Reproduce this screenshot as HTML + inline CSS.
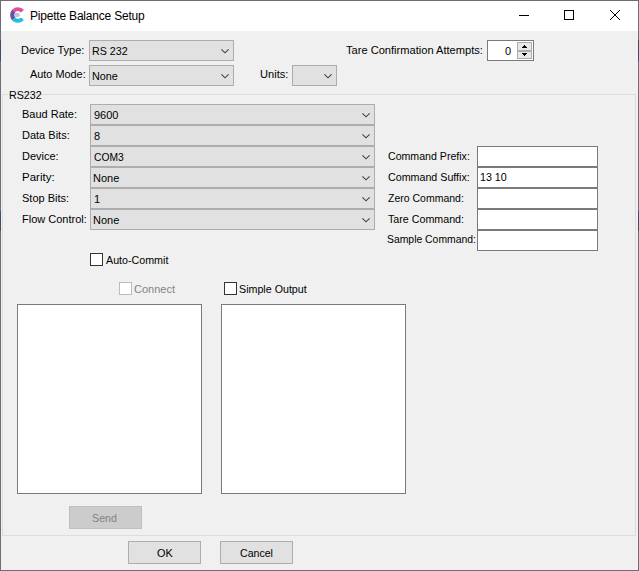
<!DOCTYPE html>
<html><head><meta charset="utf-8">
<style>
html,body{margin:0;padding:0;}
body{width:639px;height:571px;position:relative;overflow:hidden;background:#F0F0F0;font-family:"Liberation Sans",sans-serif;}
.a{position:absolute;box-sizing:border-box;}
.t{position:absolute;font-size:11px;line-height:13px;white-space:nowrap;color:#000;}
.cb{position:absolute;box-sizing:border-box;background:#E1E1E1;border:1px solid #ADADAD;height:21px;}
.tb{position:absolute;box-sizing:border-box;background:#FFFFFF;border:1px solid #7A7A7A;height:21px;}
.btn{position:absolute;box-sizing:border-box;background:#E1E1E1;border:1px solid #ADADAD;width:73px;height:23px;}
.chk{position:absolute;box-sizing:border-box;background:#FFFFFF;border:1px solid #333333;width:13px;height:13px;}
</style></head>
<body>
<div class="a" style="left:0;top:0;width:639px;height:31px;background:#FFFFFF;"></div>
<div class="a" style="left:0;top:0;width:639px;height:1px;background:#6E6E6E;"></div>
<div class="a" style="left:0;top:570px;width:639px;height:1px;background:#6E6E6E;"></div>
<div class="a" style="left:0;top:0;width:1px;height:571px;background:#6E6E6E;"></div>
<div class="a" style="left:638px;top:0;width:1px;height:571px;background:#6E6E6E;"></div>
<div class="a" style="left:0;top:40px;width:1px;height:21px;background:#3E4D6B;"></div>
<div class="a" style="left:638px;top:40px;width:1px;height:21px;background:#3E4D6B;"></div>
<div class="a" style="left:0;top:211px;width:1px;height:20px;background:#3E4D6B;"></div>
<div class="a" style="left:638px;top:211px;width:1px;height:20px;background:#3E4D6B;"></div>
<svg class="a" style="left:6px;top:4px" width="24" height="22" viewBox="6 4 24 22">
  <path d="M12.3 9.4 A8 8 0 0 1 23.9 9.9 L20.9 12.4 A3.6 3.6 0 0 0 15.2 12.3 Z" fill="#E44C9C"/>
  <path d="M12.3 9.4 L15.2 12.3 L14.2 14.9 L15.2 17.5 L12.3 20.4 A8 8 0 0 1 12.3 9.4 Z" fill="#6B50AA"/>
  <path d="M12.3 20.4 L15.2 17.5 A3.6 3.6 0 0 0 20.9 17.4 L23.9 19.9 A8 8 0 0 1 12.3 20.4 Z" fill="#1CC0E2"/>
  <ellipse cx="17.0" cy="14.9" rx="2.8" ry="2.1" fill="#C3C3C8"/>
</svg>
<div class="t" style="left:30px;top:10px;font-size:12px;letter-spacing:-0.2px;color:#000;">Pipette Balance Setup</div>
<div class="a" style="left:519px;top:15px;width:10px;height:1px;background:#000;"></div>
<div class="a" style="left:564px;top:10px;width:10px;height:10px;border:1px solid #000;"></div>
<svg class="a" style="left:610px;top:10px" width="10" height="10" viewBox="0 0 10 10" shape-rendering="crispEdges"><path d="M0 0h1v1h-1zM1 1h1v1h-1zM2 2h1v1h-1zM3 3h1v1h-1zM4 4h2v2h-2zM6 6h1v1h-1zM7 7h1v1h-1zM8 8h1v1h-1zM9 9h1v1h-1zM9 0h1v1h-1zM8 1h1v1h-1zM7 2h1v1h-1zM6 3h1v1h-1zM3 6h1v1h-1zM2 7h1v1h-1zM1 8h1v1h-1zM0 9h1v1h-1z" fill="#000"/></svg>
<div class="t" style="left:21px;top:44px;font-size:11.0px;color:#000;">Device Type:</div>
<div class="cb" style="left:89px;top:40px;width:145px;height:21px;"></div><svg class="a" style="left:220px;top:48px" width="10" height="6" viewBox="0 0 10 6"><polyline points="1.4,1.4 5,4.8 8.6,1.4" fill="none" stroke="#404040" stroke-width="1.1"/></svg>
<div class="t" style="left:92px;top:45px;font-size:10.7px;color:#000;">RS 232</div>
<div class="t" style="left:30px;top:68px;font-size:10.9px;color:#000;">Auto Mode:</div>
<div class="cb" style="left:89px;top:65px;width:145px;height:21px;"></div><svg class="a" style="left:220px;top:73px" width="10" height="6" viewBox="0 0 10 6"><polyline points="1.4,1.4 5,4.8 8.6,1.4" fill="none" stroke="#404040" stroke-width="1.1"/></svg>
<div class="t" style="left:92px;top:70px;font-size:10.8px;color:#000;">None</div>
<div class="t" style="left:260px;top:68px;font-size:11.1px;color:#000;">Units:</div>
<div class="cb" style="left:292px;top:65px;width:45px;height:21px;"></div><svg class="a" style="left:323px;top:73px" width="10" height="6" viewBox="0 0 10 6"><polyline points="1.4,1.4 5,4.8 8.6,1.4" fill="none" stroke="#404040" stroke-width="1.1"/></svg>
<div class="t" style="left:346px;top:44px;font-size:11.1px;color:#000;">Tare Confirmation Attempts:</div>
<div class="tb" style="left:487px;top:40px;width:47px;"></div>
<div class="t" style="left:505px;top:45px;font-size:11.0px;color:#000;">0</div>
<div class="a" style="left:517px;top:42px;width:15px;height:9px;background:#E8E8E8;border:1px solid #ADADAD;"></div>
<div class="a" style="left:517px;top:51px;width:15px;height:8px;background:#E8E8E8;border:1px solid #ADADAD;"></div>
<svg class="a" style="left:522px;top:45px" width="5" height="11" viewBox="0 0 5 11" shape-rendering="crispEdges"><path d="M2 0h1v1h-1zM1 1h3v1h-3zM0 2h5v1h-5zM0 8h5v1h-5zM1 9h3v1h-3zM2 10h1v1h-1z" fill="#000"/></svg>
<div class="a" style="left:2px;top:94px;width:634px;height:442px;border:1px solid #DCDCDC;"></div>
<div class="t" style="left:9px;top:89px;font-size:10.7px;color:#000;">RS232</div>
<div class="t" style="left:22px;top:108px;font-size:11.0px;color:#000;">Baud Rate:</div>
<div class="t" style="left:22px;top:129px;font-size:11.0px;color:#000;">Data Bits:</div>
<div class="t" style="left:22px;top:150px;font-size:11.0px;color:#000;">Device:</div>
<div class="t" style="left:22px;top:171px;font-size:11.5px;color:#000;">Parity:</div>
<div class="t" style="left:22px;top:192px;font-size:11.0px;color:#000;">Stop Bits:</div>
<div class="t" style="left:22px;top:213px;font-size:11.0px;color:#000;">Flow Control:</div>
<div class="cb" style="left:90px;top:104px;width:285px;height:21px;"></div><svg class="a" style="left:361px;top:112px" width="10" height="6" viewBox="0 0 10 6"><polyline points="1.4,1.4 5,4.8 8.6,1.4" fill="none" stroke="#404040" stroke-width="1.1"/></svg>
<div class="cb" style="left:90px;top:125px;width:285px;height:21px;"></div><svg class="a" style="left:361px;top:133px" width="10" height="6" viewBox="0 0 10 6"><polyline points="1.4,1.4 5,4.8 8.6,1.4" fill="none" stroke="#404040" stroke-width="1.1"/></svg>
<div class="cb" style="left:90px;top:146px;width:285px;height:21px;"></div><svg class="a" style="left:361px;top:154px" width="10" height="6" viewBox="0 0 10 6"><polyline points="1.4,1.4 5,4.8 8.6,1.4" fill="none" stroke="#404040" stroke-width="1.1"/></svg>
<div class="cb" style="left:90px;top:167px;width:285px;height:21px;"></div><svg class="a" style="left:361px;top:175px" width="10" height="6" viewBox="0 0 10 6"><polyline points="1.4,1.4 5,4.8 8.6,1.4" fill="none" stroke="#404040" stroke-width="1.1"/></svg>
<div class="cb" style="left:90px;top:188px;width:285px;height:21px;"></div><svg class="a" style="left:361px;top:196px" width="10" height="6" viewBox="0 0 10 6"><polyline points="1.4,1.4 5,4.8 8.6,1.4" fill="none" stroke="#404040" stroke-width="1.1"/></svg>
<div class="cb" style="left:90px;top:209px;width:285px;height:21px;"></div><svg class="a" style="left:361px;top:217px" width="10" height="6" viewBox="0 0 10 6"><polyline points="1.4,1.4 5,4.8 8.6,1.4" fill="none" stroke="#404040" stroke-width="1.1"/></svg>
<div class="t" style="left:94px;top:109px;font-size:11.0px;color:#000;">9600</div>
<div class="t" style="left:94px;top:130px;font-size:11.0px;color:#000;">8</div>
<div class="t" style="left:94px;top:151px;font-size:10.3px;color:#000;">COM3</div>
<div class="t" style="left:93px;top:172px;font-size:11.0px;color:#000;">None</div>
<div class="t" style="left:94px;top:193px;font-size:11.0px;color:#000;">1</div>
<div class="t" style="left:93px;top:214px;font-size:11.0px;color:#000;">None</div>
<div class="t" style="left:388px;top:150px;font-size:10.6px;color:#000;">Command Prefix:</div>
<div class="t" style="left:388px;top:171px;font-size:10.7px;color:#000;">Command Suffix:</div>
<div class="t" style="left:388px;top:192px;font-size:10.5px;color:#000;">Zero Command:</div>
<div class="t" style="left:388px;top:213px;font-size:10.7px;color:#000;">Tare Command:</div>
<div class="t" style="left:387px;top:233px;font-size:10.4px;color:#000;">Sample Command:</div>
<div class="tb" style="left:477px;top:146px;width:121px;"></div>
<div class="tb" style="left:477px;top:167px;width:121px;"></div>
<div class="tb" style="left:477px;top:188px;width:121px;"></div>
<div class="tb" style="left:477px;top:209px;width:121px;"></div>
<div class="tb" style="left:477px;top:230px;width:121px;"></div>
<div class="t" style="left:480px;top:171px;font-size:10.7px;color:#000;">13 10</div>
<div class="chk" style="left:90px;top:253px;"></div>
<div class="t" style="left:106px;top:254px;font-size:10.7px;color:#000;">Auto-Commit</div>
<div class="chk" style="left:119px;top:282px;border-color:#BCBCBC;"></div>
<div class="t" style="left:134px;top:283px;font-size:11.0px;color:#838383;">Connect</div>
<div class="chk" style="left:224px;top:282px;"></div>
<div class="t" style="left:239px;top:283px;font-size:10.7px;color:#000;">Simple Output</div>
<div class="tb" style="left:17px;top:304px;width:185px;height:190px;"></div>
<div class="tb" style="left:221px;top:304px;width:185px;height:190px;"></div>
<div class="btn" style="left:69px;top:506px;background:#CCCCCC;border-color:#BFBFBF;"></div>
<div class="t" style="left:92px;top:512px;font-size:10.7px;color:#838383;">Send</div>
<div class="btn" style="left:128px;top:541px;"></div>
<div class="t" style="left:157px;top:547px;font-size:10.9px;color:#000;">OK</div>
<div class="btn" style="left:220px;top:541px;"></div>
<div class="t" style="left:240px;top:547px;font-size:10.6px;color:#000;">Cancel</div>
</body></html>
